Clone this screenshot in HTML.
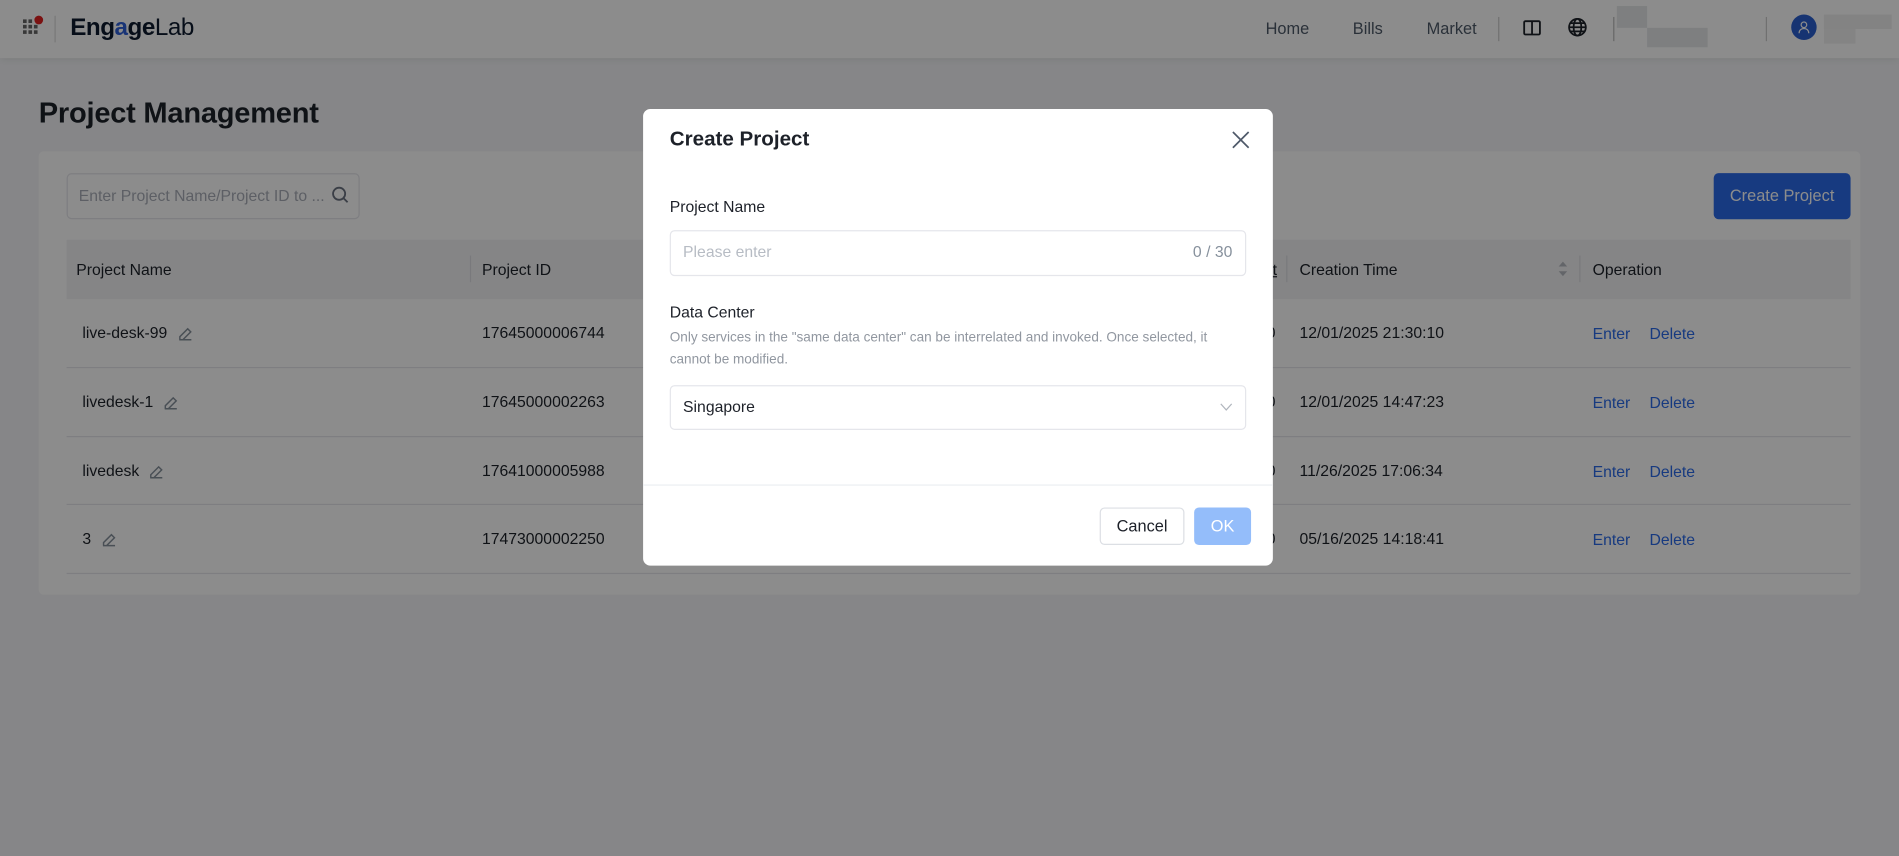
<!DOCTYPE html>
<html><head><meta charset="utf-8"><style>
*{box-sizing:border-box;margin:0;padding:0}
html,body{width:1899px;height:856px;overflow:hidden;background:#f4f5f8;font-family:"Liberation Sans",Arial,sans-serif}
#w{position:absolute;left:0;top:0;width:1568px;height:707px;transform:scale(1.21110);transform-origin:0 0}
.a{position:absolute;white-space:nowrap}
.hdr{left:0;top:0;width:1568px;height:48px;background:#fff;box-shadow:0 2px 6px rgba(0,0,0,.08)}
.nav{font-size:13.5px;color:#4e5969;top:16px}
.card{left:32px;top:125px;width:1504px;height:366px;background:#fff;border-radius:4px}
.th{top:198px;height:49px;left:55px;width:1473px;background:#f2f3f5}
.t{font-size:13px;color:#1d2129}
.line{height:1px;background:#e5e6eb;left:55px;width:1473px}
.lnk{font-size:13px;color:#2a6ae9}
#ov{position:absolute;left:0;top:0;width:1568px;height:707px;background:rgba(0,0,0,.45)}
.modal{left:531px;top:90px;width:520px;height:377px;background:#fff;border-radius:6px}
.inp{border:1px solid #e5e6eb;border-radius:4px;background:#fff}
</style></head><body><div id="w">
<div class="a hdr"></div>
<svg class="a" style="left:18px;top:12px" width="20" height="20" viewBox="0 0 20 20"><g fill="#666"><rect x="1" y="4" width="3" height="3"/><rect x="5.5" y="4" width="3" height="3"/><rect x="1" y="8.5" width="3" height="3"/><rect x="5.5" y="8.5" width="3" height="3"/><rect x="10" y="8.5" width="3" height="3"/><rect x="1" y="13" width="3" height="3"/><rect x="5.5" y="13" width="3" height="3"/><rect x="10" y="13" width="3" height="3"/></g><circle cx="14" cy="4.5" r="3.6" fill="#e02020"/></svg>
<div class="a" style="left:45px;top:13px;width:1px;height:22px;background:#ddd"></div>
<div class="a" style="left:58px;top:12px;font-size:20px;font-weight:bold;color:#0d1b2e;letter-spacing:-.4px">Eng<span style="color:#2e5fd8">a</span>ge<span style="font-weight:normal">Lab</span></div>
<div class="a nav" style="left:1045px">Home</div>
<div class="a nav" style="left:1117px">Bills</div>
<div class="a nav" style="left:1178px">Market</div>
<div class="a" style="left:1237px;top:14px;width:1px;height:20px;background:#ccc"></div>
<svg class="a" style="left:1257px;top:15px" width="16" height="16" viewBox="0 0 16 16" fill="none" stroke="#1d2129" stroke-width="1.5"><rect x="1.5" y="2.5" width="13" height="11" rx="1"/><line x1="8" y1="2.5" x2="8" y2="13.5"/></svg>
<svg class="a" style="left:1294px;top:14px" width="17" height="17" viewBox="0 0 16 16" fill="none" stroke="#1d2129" stroke-width="1.4"><circle cx="8" cy="8" r="6.5"/><ellipse cx="8" cy="8" rx="3" ry="6.5"/><line x1="1.5" y1="8" x2="14.5" y2="8"/><line x1="2.5" y1="4.8" x2="13.5" y2="4.8"/><line x1="2.5" y1="11.2" x2="13.5" y2="11.2"/></svg>
<div class="a" style="left:1332px;top:14px;width:1px;height:20px;background:#bbb"></div>
<div class="a" style="left:1335px;top:5px;width:25px;height:18px;background:#e6e7ea"></div>
<div class="a" style="left:1360px;top:23px;width:50px;height:16px;background:#e6e7ea"></div>
<div class="a" style="left:1385px;top:5px;width:25px;height:18px;background:#fff6"></div>
<div class="a" style="left:1435px;top:5px;width:23px;height:16px;background:#fff"></div>
<div class="a" style="left:1458px;top:14px;width:1px;height:20px;background:#ccc"></div>
<div class="a" style="left:1479px;top:12px;width:21px;height:21px;border-radius:50%;background:#2a5fd0"></div>
<svg class="a" style="left:1484px;top:17px" width="11" height="11" viewBox="0 0 11 11" fill="none" stroke="#fff" stroke-width="1"><circle cx="5.5" cy="3.5" r="2.3"/><path d="M1.5 10.5c0-2.5 1.8-4 4-4s4 1.5 4 4"/></svg>
<div class="a" style="left:1506px;top:12px;width:56px;height:12px;background:#eee"></div>
<div class="a" style="left:1506px;top:24px;width:26px;height:12px;background:#f0f0f0"></div>

<div class="a" style="left:32px;top:80px;font-size:24px;font-weight:bold;color:#1d2129;letter-spacing:-.2px">Project Management</div>
<div class="a card"></div>
<div class="a inp" style="left:55px;top:143px;width:242px;height:38px"></div>
<div class="a" style="left:65px;top:154px;font-size:13px;color:#a9aeb8">Enter Project Name/Project ID to ...</div>
<svg class="a" style="left:273px;top:153px" width="16" height="16" viewBox="0 0 16 16" fill="none" stroke="#6b7280" stroke-width="1.5"><circle cx="7" cy="7" r="5"/><line x1="10.7" y1="10.7" x2="14" y2="14"/></svg>
<div class="a" style="left:1415px;top:143px;width:113px;height:38px;border-radius:4px;background:#2a6ae9;color:#fff;font-size:13.5px;text-align:center;line-height:38px">Create Project</div>
<div class="a th"></div>
<div class="a t" style="left:63px;top:215px">Project Name</div>
<div class="a" style="left:388px;top:211px;width:1px;height:22px;background:#dcdde2"></div>
<div class="a t" style="left:398px;top:215px">Project ID</div>
<div class="a t" style="left:1040px;top:215px;text-decoration:underline">...t</div>
<div class="a" style="left:1062px;top:211px;width:1px;height:22px;background:#dcdde2"></div>
<div class="a t" style="left:1073px;top:215px">Creation Time</div>
<svg class="a" style="left:1286px;top:214px" width="9" height="16" viewBox="0 0 9 16" fill="#b5b8bf"><path d="M4.5 2L8 6H1z"/><path d="M4.5 14L8 10H1z"/></svg>
<div class="a" style="left:1304px;top:211px;width:1px;height:22px;background:#dcdde2"></div>
<div class="a t" style="left:1315px;top:215px">Operation</div>

<div class="a line" style="top:303px"></div>
<div class="a line" style="top:360px"></div>
<div class="a line" style="top:416px"></div>
<div class="a line" style="top:473px"></div>

<div class="a t" style="left:68px;top:267px">live-desk-99</div>
<div class="a t" style="left:68px;top:324px">livedesk-1</div>
<div class="a t" style="left:68px;top:381px">livedesk</div>
<div class="a t" style="left:68px;top:437px">3</div>
<svg class="a" style="left:146px;top:268px" width="14" height="14" viewBox="0 0 14 14" fill="none" stroke="#86909c" stroke-width="1.2"><path d="M2 12.5h10M2.5 12.5V10L9 3.5l2.5 2.5L5 12.5"/></svg>
<svg class="a" style="left:134px;top:325px" width="14" height="14" viewBox="0 0 14 14" fill="none" stroke="#86909c" stroke-width="1.2"><path d="M2 12.5h10M2.5 12.5V10L9 3.5l2.5 2.5L5 12.5"/></svg>
<svg class="a" style="left:122px;top:382px" width="14" height="14" viewBox="0 0 14 14" fill="none" stroke="#86909c" stroke-width="1.2"><path d="M2 12.5h10M2.5 12.5V10L9 3.5l2.5 2.5L5 12.5"/></svg>
<svg class="a" style="left:83px;top:438px" width="14" height="14" viewBox="0 0 14 14" fill="none" stroke="#86909c" stroke-width="1.2"><path d="M2 12.5h10M2.5 12.5V10L9 3.5l2.5 2.5L5 12.5"/></svg>
<div class="a t" style="left:398px;top:267px">17645000006744</div>
<div class="a t" style="left:398px;top:324px">17645000002263</div>
<div class="a t" style="left:398px;top:381px">17641000005988</div>
<div class="a t" style="left:398px;top:437px">17473000002250</div>
<div class="a t" style="left:1046px;top:267px">0</div>
<div class="a t" style="left:1046px;top:324px">0</div>
<div class="a t" style="left:1046px;top:381px">0</div>
<div class="a t" style="left:1046px;top:437px">0</div>
<div class="a t" style="left:1073px;top:267px">12/01/2025 21:30:10</div>
<div class="a t" style="left:1073px;top:324px">12/01/2025 14:47:23</div>
<div class="a t" style="left:1073px;top:381px">11/26/2025 17:06:34</div>
<div class="a t" style="left:1073px;top:437px">05/16/2025 14:18:41</div>
<div class="a lnk" style="left:1315px;top:268px">Enter</div><div class="a lnk" style="left:1362px;top:268px">Delete</div>
<div class="a lnk" style="left:1315px;top:325px">Enter</div><div class="a lnk" style="left:1362px;top:325px">Delete</div>
<div class="a lnk" style="left:1315px;top:382px">Enter</div><div class="a lnk" style="left:1362px;top:382px">Delete</div>
<div class="a lnk" style="left:1315px;top:438px">Enter</div><div class="a lnk" style="left:1362px;top:438px">Delete</div>

<div id="ov"></div>
<div class="a modal"></div>
<div class="a" style="left:553px;top:105px;font-size:17px;font-weight:bold;color:#1d2129">Create Project</div>
<svg class="a" style="left:1017px;top:108px" width="15" height="15" viewBox="0 0 15 15" stroke="#4e5969" stroke-width="1.4"><line x1="1" y1="1" x2="14" y2="14"/><line x1="14" y1="1" x2="1" y2="14"/></svg>
<div class="a t" style="left:553px;top:163px">Project Name</div>
<div class="a inp" style="left:553px;top:190px;width:476px;height:38px"></div>
<div class="a" style="left:564px;top:200px;font-size:13px;color:#b7bcc4">Please enter</div>
<div class="a" style="left:985px;top:200px;font-size:13px;color:#86909c">0 / 30</div>
<div class="a t" style="left:553px;top:250px">Data Center</div>
<div class="a" style="left:553px;top:270px;font-size:11.2px;color:#9197a0;line-height:18px;width:470px;white-space:normal">Only services in the "same data center" can be interrelated and invoked. Once selected, it cannot be modified.</div>
<div class="a inp" style="left:553px;top:318px;width:476px;height:37px"></div>
<div class="a t" style="left:564px;top:328px">Singapore</div>
<svg class="a" style="left:1007px;top:332px" width="11" height="8" viewBox="0 0 11 8" fill="none" stroke="#b0b5bd" stroke-width="1"><path d="M1 1.5l4.5 5 4.5-5"/></svg>
<div class="a" style="left:531px;top:400px;width:520px;height:1px;background:#eceef1"></div>
<div class="a" style="left:908px;top:419px;width:70px;height:31px;border:1px solid #dcdfe4;border-radius:4px;font-size:13.5px;color:#1d2129;text-align:center;line-height:29px">Cancel</div>
<div class="a" style="left:986px;top:419px;width:47px;height:31px;border-radius:4px;background:#94bdfa;font-size:13.5px;color:#fff;text-align:center;line-height:31px">OK</div>
</div></body></html>
